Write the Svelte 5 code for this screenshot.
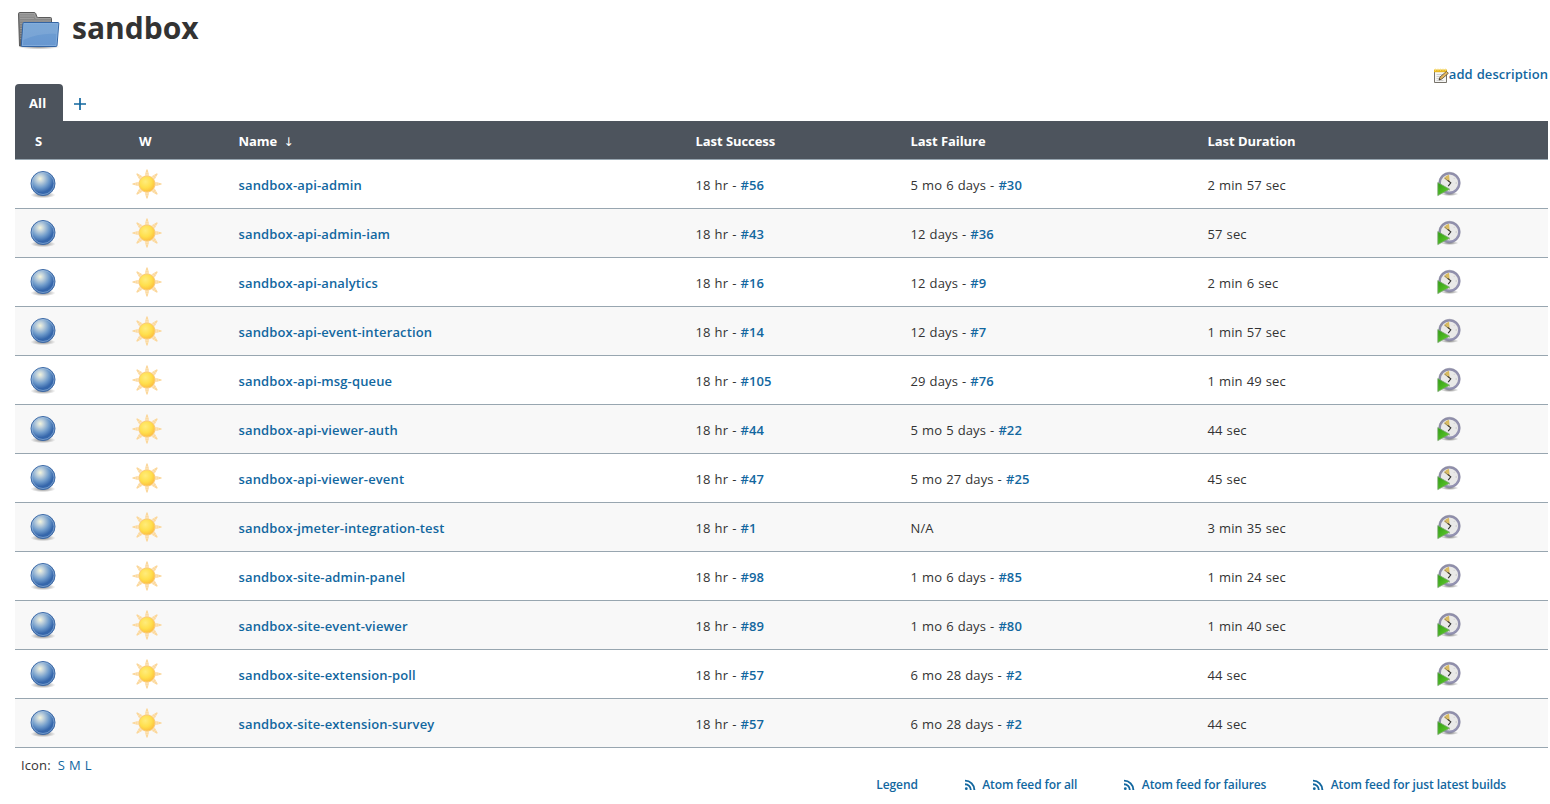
<script>
  const jobs = [
    ['sandbox-api-admin', '#56', '5 mo 6 days', '#30', '2 min 57 sec'],
    ['sandbox-api-admin-iam', '#43', '12 days', '#36', '57 sec'],
    ['sandbox-api-analytics', '#16', '12 days', '#9', '2 min 6 sec'],
    ['sandbox-api-event-interaction', '#14', '12 days', '#7', '1 min 57 sec'],
    ['sandbox-api-msg-queue', '#105', '29 days', '#76', '1 min 49 sec'],
    ['sandbox-api-viewer-auth', '#44', '5 mo 5 days', '#22', '44 sec'],
    ['sandbox-api-viewer-event', '#47', '5 mo 27 days', '#25', '45 sec'],
    ['sandbox-jmeter-integration-test', '#1', 'N/A', '', '3 min 35 sec'],
    ['sandbox-site-admin-panel', '#98', '1 mo 6 days', '#85', '1 min 24 sec'],
    ['sandbox-site-event-viewer', '#89', '1 mo 6 days', '#80', '1 min 40 sec'],
    ['sandbox-site-extension-poll', '#57', '6 mo 28 days', '#2', '44 sec'],
    ['sandbox-site-extension-survey', '#57', '6 mo 28 days', '#2', '44 sec']
  ];
  const feeds = ['Atom feed for all', 'Atom feed for failures', 'Atom feed for just latest builds'];
  const rays = [0, 45, 90, 135, 180, 225, 270, 315];
</script>

<svg class="defs" width="0" height="0" aria-hidden="true">
  <defs>
    <radialGradient id="ballFill" cx=".38" cy=".3" r=".72">
      <stop offset="0" stop-color="#f4f5dc" />
      <stop offset=".2" stop-color="#c3d3dc" />
      <stop offset=".52" stop-color="#6f9bcb" />
      <stop offset=".8" stop-color="#3566ab" />
      <stop offset="1" stop-color="#3568ac" />
    </radialGradient>
    <radialGradient id="shadow">
      <stop offset="0" stop-color="#000" stop-opacity=".5" />
      <stop offset="1" stop-color="#000" stop-opacity="0" />
    </radialGradient>
    <radialGradient id="sunFill" cx=".4" cy=".35" r=".7">
      <stop offset="0" stop-color="#ffec7c" />
      <stop offset=".55" stop-color="#ffdf4c" />
      <stop offset="1" stop-color="#fcb93c" />
    </radialGradient>
    <linearGradient id="folderBack" x1="0" y1="0" x2="0" y2="1">
      <stop offset="0" stop-color="#929292" />
      <stop offset="1" stop-color="#606060" />
    </linearGradient>
    <linearGradient id="folderFront" x1="0" y1="0" x2="0" y2="1">
      <stop offset="0" stop-color="#6e9fd3" />
      <stop offset="1" stop-color="#6897d0" />
    </linearGradient>
    <linearGradient id="play" x1="0" y1="0" x2="1" y2="1">
      <stop offset="0" stop-color="#2f9e10" />
      <stop offset="1" stop-color="#67cf35" />
    </linearGradient>
    <linearGradient id="rim" x1="0" y1="0" x2="1" y2="1">
      <stop offset="0" stop-color="#8e8da6" />
      <stop offset="1" stop-color="#9594b5" />
    </linearGradient>
    <symbol id="ball" viewBox="0 0 32 32">
      <ellipse cx="16" cy="27" rx="12.5" ry="3.2" fill="url(#shadow)" />
      <circle cx="16" cy="15.5" r="12" fill="url(#ballFill)" stroke="#3c69a6" />
      <circle cx="16" cy="15.5" r="11" fill="none" stroke="#a5c2e2" stroke-opacity=".55" />
    </symbol>
    <symbol id="sun" viewBox="0 0 32 32">
      {#each rays as angle}
        <g transform="rotate({angle} 16 16)">
          <path d="M13.7 7.7 15.4 1.4h1.2l1.7 6.3z" fill="#fbd79a" />
          <path d="M14.5 4.8h3M14 6.7h4" stroke="#fff" stroke-opacity=".65" stroke-width=".5" />
        </g>
      {/each}
      <circle cx="16" cy="16" r="8" fill="url(#sunFill)" stroke="#fac872" stroke-width=".9" />
    </symbol>
    <symbol id="clock" viewBox="0 0 26 26">
      <ellipse cx="14.5" cy="23" rx="9" ry="2" fill="url(#shadow)" />
      <circle cx="14.5" cy="12" r="9.7" fill="#e9e9e8" stroke="url(#rim)" stroke-width="2.2" />
      <circle cx="14.5" cy="12" r="10.8" fill="none" stroke="#77768f" stroke-width=".4" />
      <path d="M14.8 11.5 8.9 7.4Q10.8 4.4 14 3.8z" fill="#d9bb61" />
      <path d="m9.7 6.9 3.6 3.4" stroke="#777" stroke-width=".7" />
      <path d="m12.7 9.3 3.1 2.6-2.6 3.3" fill="none" stroke="#333" stroke-width="1.1" />
      <path d="M22 12h-1.4M14.5 20v-1.4M20 6.7l-.9.9" stroke="#bbb" stroke-width=".8" />
      <path d="M2.8 11.6v13L14.6 18.2z" fill="url(#play)" stroke="#7ba571" stroke-width=".8" />
    </symbol>
    <symbol id="feed" viewBox="0 0 12 12">
      <circle cx="2.3" cy="9.7" r="1.4" fill="#12679f" />
      <path d="M1 5.2A5.8 5.8 0 0 1 6.8 11M1 1.6A9.4 9.4 0 0 1 10.4 11" fill="none" stroke="#12679f" stroke-width="1.9" />
    </symbol>
  </defs>
</svg>

<main>
  <header>
    <svg class="folder" viewBox="0 0 48 48" width="48" height="48">
      <ellipse cx="24" cy="42.7" rx="21" ry="2.8" fill="url(#shadow)" />
      <path d="M4.5 42 3.5 9.8q0-1.3 1.3-1.3h14.4q1 0 1.5 1l1.2 3.2q.3.8 1.3.8h12.3q1 0 1 1V42z" fill="url(#folderBack)" stroke="#5b5b5b" />
      <path d="M4.8 9.5h14.5l1.5 5h15M5 12h14M5 14.5h14M5 17h31M5 19.5h4M5 22h3M5 24.5h3M5 27h3M5 29.5h2M5 32h2M5 34.5h2" fill="none" stroke="#bdbdbd" stroke-opacity=".5" stroke-width=".8" />
      <path d="M9 18.5h34q.9 0 .8 1l-1.8 22q-.1 1-1.1 1H7.2q-1 0-.9-1l1.6-22q.1-1 1.1-1z" fill="url(#folderFront)" stroke="#3465a4" />
      <path d="M9 19.5h33.8l-1.8 22H7.4z" fill="none" stroke="#9dc0e5" stroke-opacity=".6" stroke-width=".8" />
      <path d="M9.5 20h32.9l-.8 10C31 29 19 31 8.4 36z" fill="#fff" opacity=".1" />
    </svg>
    <h1>sandbox</h1>
  </header>

  <div class="description">
    <svg viewBox="0 0 16 16" width="16" height="16">
      <path d="M1.5 2.5h12v12h-12z" fill="#f6f6f4" stroke="#77736b" />
      <path d="M1 1.5h13v2.7H1z" fill="#e9b922" />
      <path d="M2.5.7v2M5 .7v2M7.5.7v2M10 .7v2M12.5.7v2" stroke="#f8df7d" />
      <path d="M3.5 6.5h7M3.5 8.5h6M3.5 10.5h4M3.5 12.5h7" stroke="#c4c4c4" stroke-width=".8" />
      <path d="m6 12 1-3 6.5-5.6 1.9 1.9L8.8 11z" fill="#e4b75d" stroke="#5b4a32" stroke-width=".8" />
      <path d="m6 12 .8-1.5.8.8z" fill="#222" />
    </svg>
    <a>add description</a>
  </div>

  <nav>
    <span class="tab">All</span>
    <svg class="plus" viewBox="0 0 12 12" width="12" height="12"><path d="M0 6h12M6 0v12" stroke="#12679f" stroke-width="1.7" /></svg>
  </nav>

  <section>
    <div class="row head">
      <span class="status">S</span><span class="weather">W</span><span>Name <i>↓</i></span><span>Last Success</span><span>Last Failure</span><span>Last Duration</span><span></span>
    </div>
    {#each jobs as [name, success, age, failure, duration]}
      <div class="row">
        <span class="ball"><svg width="32" height="32"><use href="#ball" /></svg></span>
        <span class="sun"><svg width="32" height="32"><use href="#sun" /></svg></span>
        <span class="name"><a>{name}</a></span>
        <span>18 hr - <a>{success}</a></span>
        <span>{age}{#if failure}{' - '}<a>{failure}</a>{/if}</span>
        <span>{duration}</span>
        <span class="build"><svg width="26" height="26"><use href="#clock" /></svg></span>
      </div>
    {/each}
  </section>

  <div class="sizes">Icon: <span><b>S</b> <b>M</b> <b>L</b></span></div>

  <footer>
    <a>Legend</a>
    {#each feeds as feed}
      <a class="feed"><svg width="12" height="12"><use href="#feed" /></svg><span>{feed}</span></a>
    {/each}
  </footer>
</main>

<style>
  :global(body) { background: #fff; overflow: hidden; }
  .defs { display: block; height: 0; }
  main {
    box-sizing: border-box;
    width: 1550px;
    height: 804px;
    padding: 4px 2px 0 15px;
    color: #333;
    font: 13px/20px "Open Sans", "Noto Sans", sans-serif;
    letter-spacing: .12px;
    word-spacing: .5px;
    overflow: hidden;
  }
  svg { display: block; flex: none; }
  a { color: #12679f; font-weight: 600; }
  header { display: flex; height: 48px; }
  h1 { margin: 0 0 0 9px; font-size: 30px; line-height: 48px; font-weight: 700; letter-spacing: 0; }
  .description { display: flex; justify-content: flex-end; height: 32px; padding-top: 12px; box-sizing: border-box; }
  .description svg { margin-top: 4px; }
  .description a { letter-spacing: .06px; }
  nav { display: flex; align-items: center; height: 37px; }
  .tab {
    box-sizing: border-box; width: 48px; height: 37px; padding-left: 14px;
    border-radius: 4px 4px 0 0; background: #4d545d; color: #fff; font-weight: 700; line-height: 38px;
  }
  .plus { margin: 2px 0 0 11px; }
  .row {
    display: grid;
    grid-template-columns: 104px 119.5px 457px 215px 297px 215.5px 1fr;
    align-items: center; box-sizing: border-box; height: 49px;
    border-bottom: 1px solid #98a6b0; white-space: nowrap;
  }
  .row:nth-child(odd) { background: #f8f8f8; }
  .row:nth-child(2) { background: #fff; }
  .row > span { padding-top: 2px; }
  .row.head { height: 39px; background: #4d545d; color: #fff; font-weight: 700; letter-spacing: -.06px; word-spacing: 0; }
  .head .status { padding-left: 20px; }
  .head .weather { padding-left: 20px; }
  .head i { margin-left: 3px; font: 12px "DejaVu Sans", sans-serif; }
  .row > .ball { padding: 0 0 0 12px; }
  .row > .sun { padding: 0 0 0 12px; }
  .row > .build { padding: 0 0 0 12px; }
  .row a { letter-spacing: .1px; }
  .row .name a { letter-spacing: .14px; }
  .sizes { margin: 7px 0 0 6px; height: 20px; }
  .sizes span { margin-left: 3px; color: #12679f; word-spacing: .5px; }
  .sizes b { font-weight: 400; }
  footer { display: flex; justify-content: flex-end; padding-right: 42px; font-size: 12px; line-height: 20px; letter-spacing: -.11px; word-spacing: 0; white-space: nowrap; }
  .feed { display: flex; align-items: center; gap: 6.5px; margin-left: 46px; }
</style>
